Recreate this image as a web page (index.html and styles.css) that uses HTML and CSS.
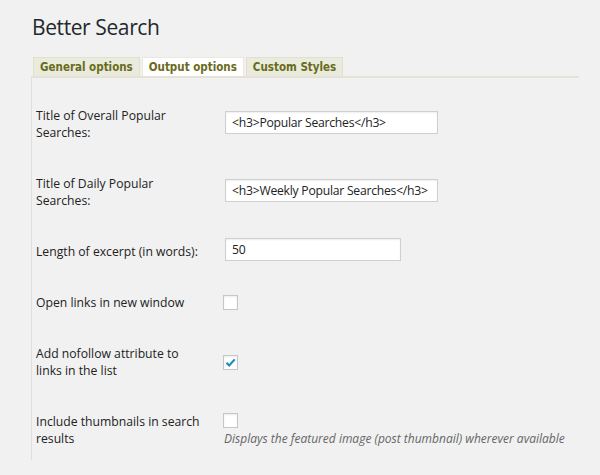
FILE: index.html
```html
<!DOCTYPE html>
<html>
<head>
<meta charset="utf-8">
<link rel="stylesheet" href="styles.css">
</head>
<body>
<div class="wrap">
  <h1 class="title">Better Search</h1>
  <div class="tabs">
    <span class="tab">General options</span>
    <span class="tab active">Output options</span>
    <span class="tab">Custom Styles</span>
  </div>
  <div class="panel">
    <div class="row tall">
      <div class="label">Title of Overall Popular Searches:</div>
      <div class="field"><input class="text wide" type="text" value="<h3>Popular Searches</h3>"></div>
    </div>
    <div class="row tall">
      <div class="label">Title of Daily Popular Searches:</div>
      <div class="field"><input class="text wide" type="text" value="<h3>Weekly Popular Searches</h3>"></div>
    </div>
    <div class="row">
      <div class="label">Length of excerpt (in words):</div>
      <div class="field"><input class="text narrow" type="text" value="50"></div>
    </div>
    <div class="row">
      <div class="label">Open links in new window</div>
      <div class="field center"><span class="check"></span></div>
    </div>
    <div class="row tall">
      <div class="label">Add nofollow attribute to links in the list</div>
      <div class="field center"><span class="check"><svg class="tick" viewBox="0 0 12 12"><path d="M1.6 6.3 L4.6 9.2 L10.6 2.6" fill="none" stroke="#1e8cbe" stroke-width="2.4" stroke-linejoin="miter"/></svg></span></div>
    </div>
    <div class="row tall">
      <div class="label">Include thumbnails in search results</div>
      <div class="field center">
        <span class="check"></span>
        <p class="desc">Displays the featured image (post thumbnail) wherever available</p>
      </div>
    </div>
  </div>
</div>
</body>
</html>
```
FILE: styles.css
```css
html, body {
  margin: 0;
  padding: 0;
  background: #f1f1f1;
}
body {
  font-family: "Open Sans", "Liberation Sans", sans-serif;
  color: #222;
  width: 600px;
  height: 475px;
  overflow: hidden;
}
.wrap {
  padding-left: 31px;
}
.title {
  margin: 0;
  padding: 14px 0 0 1px;
  font-size: 21px;
  letter-spacing: -0.4px;
  font-weight: 400;
  line-height: 27px;
  color: #23282d;
}
.tabs {
  display: flex;
  gap: 2px;
  margin: 16px 0 0 2px;
  height: 19px;
}
.tab {
  display: block;
  box-sizing: border-box;
  height: 19px;
  padding: 0 6px;
  background: #e9ecdc;
  border: 1px solid #e2e0cb;
  border-bottom: none;
  font-family: "DejaVu Sans Condensed", "DejaVu Sans", sans-serif;
  font-weight: 700;
  font-size: 11.5px;
  line-height: 19px;
  color: #6a6a1c;
  white-space: nowrap;
}
.tab.active {
  background: #fff;
  border-color: #ece9dc;
}
.panel {
  width: 543px;
  height: 370px;
  border-top: 2px solid #e6e2d8;
  border-left: 1px solid #dfdfdf;
  padding: 12px 0 0 4px;
}
.row {
  display: grid;
  grid-template-columns: 189px 1fr;
  min-height: 51px;
}
.row.tall {
  min-height: 68px;
}
.label {
  padding: 17px 0;
  font-size: 12.2px;
  line-height: 17px;
  width: 166px;
}
.field {
  align-self: center;
  margin-bottom: 4px;
}
.field.center {
  margin-bottom: 0;
}
.text {
  display: block;
  box-sizing: border-box;
  height: 23px;
  margin: 0;
  padding: 0 6px;
  border: 1px solid #cfcfcf;
  background: #fff;
  box-shadow: inset 0 1px 2px rgba(0,0,0,0.07);
  font-family: "Open Sans", "Liberation Sans", sans-serif;
  font-size: 12.2px;
  letter-spacing: -0.25px;
  color: #222;
  outline: none;
}
.text.wide {
  width: 213px;
}
.text.narrow {
  width: 176px;
}
.check {
  display: block;
  box-sizing: border-box;
  width: 15px;
  height: 15px;
  margin-left: -2px;
  border: 1px solid #c6c6c6;
  background: #fff;
  box-shadow: inset 0 1px 2px rgba(0,0,0,0.08);
  position: relative;
}
.tick {
  position: absolute;
  left: 1px;
  top: 1px;
  width: 11px;
  height: 11px;
}
.desc {
  margin: 2px 0 0 -1px;
  font-size: 12px;
  line-height: 17px;
  font-style: italic;
  color: #666;
  white-space: nowrap;
}
```
